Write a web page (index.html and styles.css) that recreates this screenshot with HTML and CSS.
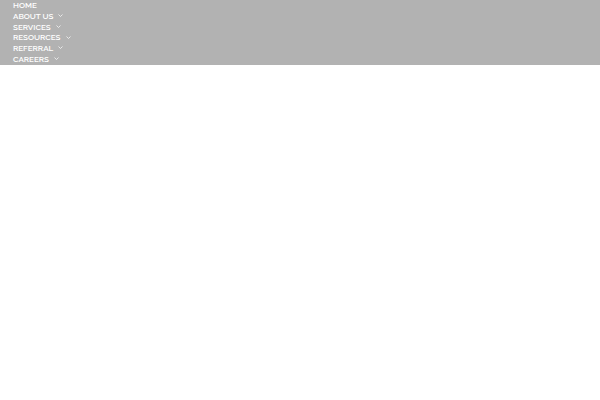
FILE: index.html
```html
<!DOCTYPE html>
<html lang="en">
<head>
  <meta charset="UTF-8">
  <meta name="viewport" content="width=device-width, initial-scale=1">
  <title>Home</title>
  <link rel="stylesheet" href="styles.css">
</head>
<body>

<header class="site-header">
  <nav>
    <ul class="menu">
      <li><a href="#home">HOME</a></li>
      <li><a href="#about">ABOUT US <svg class="arrow" viewBox="0 0 5 3"><path d="M0.5 0.5L2.5 2.5L4.5 0.5"/></svg></a></li>
      <li><a href="#services">SERVICES <svg class="arrow" viewBox="0 0 5 3"><path d="M0.5 0.5L2.5 2.5L4.5 0.5"/></svg></a></li>
      <li><a href="#resources">RESOURCES <svg class="arrow" viewBox="0 0 5 3"><path d="M0.5 0.5L2.5 2.5L4.5 0.5"/></svg></a></li>
      <li><a href="#referral">REFERRAL <svg class="arrow" viewBox="0 0 5 3"><path d="M0.5 0.5L2.5 2.5L4.5 0.5"/></svg></a></li>
      <li><a href="#careers">CAREERS <svg class="arrow" viewBox="0 0 5 3"><path d="M0.5 0.5L2.5 2.5L4.5 0.5"/></svg></a></li>
    </ul>
  </nav>
</header>

</body>
</html>
```
FILE: styles.css
```css
body { margin: 0; background: #fff; font-family: Raleway, Lato, "Open Sans", sans-serif; }
.site-header { background: #b2b2b2; }
.menu { display: grid; grid-auto-rows: 1fr; min-height: 64px; list-style: none; margin: 0; padding: 0 13px 1px; }
.menu li { display: flex; }
.menu a { display: flex; align-items: center; gap: 5px; color: #fff; font-size: 8px; font-weight: 600; line-height: 10px; text-decoration: none; }
.arrow { width: 5px; height: 3px; fill: none; stroke: #fff; stroke-width: 0.7; }
```
